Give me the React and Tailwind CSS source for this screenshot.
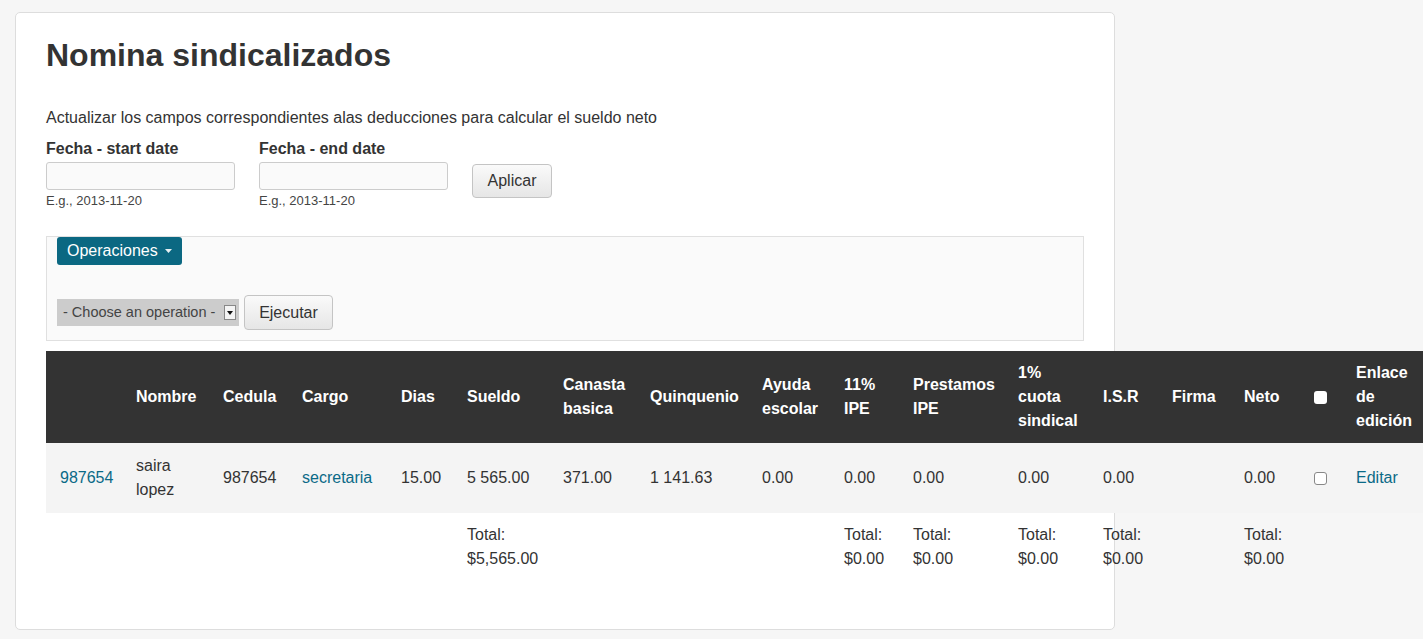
import React from 'react'

const FONT = { fontFamily: '"Liberation Sans", Arial, sans-serif' }

const cols = [
  { key: 'id', label: [], w: 'w-[76px]' },
  { key: 'nombre', label: ['Nombre'], w: 'w-[87px]' },
  { key: 'cedula', label: ['Cedula'], w: 'w-[79px]' },
  { key: 'cargo', label: ['Cargo'], w: 'w-[99px]' },
  { key: 'dias', label: ['Dias'], w: 'w-[66px]' },
  { key: 'sueldo', label: ['Sueldo'], w: 'w-[96px]' },
  { key: 'canasta', label: ['Canasta', 'basica'], w: 'w-[87px]' },
  { key: 'quinq', label: ['Quinquenio'], w: 'w-[112px]' },
  { key: 'ayuda', label: ['Ayuda', 'escolar'], w: 'w-[82px]' },
  { key: 'ipe', label: ['11%', 'IPE'], w: 'w-[69px]' },
  { key: 'prest', label: ['Prestamos', 'IPE'], w: 'w-[105px]' },
  { key: 'cuota', label: ['1%', 'cuota', 'sindical'], w: 'w-[85px]' },
  { key: 'isr', label: ['I.S.R'], w: 'w-[69px]' },
  { key: 'firma', label: ['Firma'], w: 'w-[72px]' },
  { key: 'neto', label: ['Neto'], w: 'w-[70px]' },
  { key: 'check', label: [], w: 'w-[42px]' },
  { key: 'enlace', label: ['Enlace', 'de', 'edición'], w: 'w-[90px]' },
]

const row = {
  id: <a className="text-[#0b6a87]" href="#">987654</a>,
  nombre: <>saira<br />lopez</>,
  cedula: '987654',
  cargo: <a className="text-[#0b6a87]" href="#">secretaria</a>,
  dias: '15.00',
  sueldo: '5 565.00',
  canasta: '371.00',
  quinq: '1 141.63',
  ayuda: '0.00',
  ipe: '0.00',
  prest: '0.00',
  cuota: '0.00',
  isr: '0.00',
  firma: '',
  neto: '0.00',
  check: <span className="block h-[13px] w-[13px] rounded-[3px] border border-[#888] bg-white" />,
  enlace: <a className="text-[#0b6a87]" href="#">Editar</a>,
}

const totals = {
  sueldo: '$5,565.00',
  ipe: '$0.00',
  prest: '$0.00',
  cuota: '$0.00',
  isr: '$0.00',
  neto: '$0.00',
}

function DateField({ label }) {
  return (
    <div className="flex flex-col">
      <label className="text-[16px] font-bold leading-[20px] text-[#333]">{label}</label>
      <input className="mt-[3px] h-[28px] w-[189px] rounded-[3px] border border-[#ccc] bg-[#fafafa]" />
      <span className="mt-[4px] text-[13px] leading-[14px] text-[#444]">E.g., 2013-11-20</span>
    </div>
  )
}

export default function App() {
  return (
    <div className="min-h-screen bg-[#f6f6f6] pl-[15px] pt-[12px] text-[#333]" style={FONT}>
      <div className="h-[618px] w-[1100px] rounded-[5px] border border-[#ddd] bg-white pl-[30px] pt-[20px]">
        <h1 className="text-[32px] font-bold leading-[44px] text-[#333]">Nomina sindicalizados</h1>
        <p className="mt-[31px] text-[16px] leading-[20px]">
          Actualizar los campos correspondientes alas deducciones para calcular el sueldo neto
        </p>
        <div className="mt-[11px] flex items-start gap-[24px]">
          <DateField label="Fecha - start date" />
          <DateField label="Fecha - end date" />
          <button className="mt-[25px] h-[34px] w-[80px] rounded-[4px] border border-[#c4c4c4] bg-gradient-to-b from-[#fafafa] to-[#e6e6e6] text-[16px] text-[#333]">
            Aplicar
          </button>
        </div>

        <div className="mt-[28px] h-[105px] w-[1038px] border border-[#e0e0e0] bg-[#fafafa] pl-[10px]">
          <button className="flex h-[28px] items-center gap-[7px] rounded-[3px] bg-[#0b6882] px-[10px] text-[16px] text-white">
            Operaciones
            <svg width="7" height="4" viewBox="0 0 7 4"><path d="M0 0h7L3.5 4z" fill="#e8f0f3" /></svg>
          </button>
          <div className="mt-[30px] flex items-center gap-[5px]">
            <div className="flex h-[27px] w-[182px] items-center justify-between bg-[#cccccc] pl-[6px] pr-[3px] text-[14.5px] text-[#444]">
              <span>- Choose an operation -</span>
              <span className="flex h-[15px] w-[12px] items-center justify-center border border-[#888] bg-[#f4f4f4]">
                <svg width="6" height="4" viewBox="0 0 6 4"><path d="M0 0h6L3 4z" fill="#111" /></svg>
              </span>
            </div>
            <button className="h-[35px] w-[89px] rounded-[4px] border border-[#c4c4c4] bg-gradient-to-b from-[#fafafa] to-[#e6e6e6] text-[16px] text-[#333]">
              Ejecutar
            </button>
          </div>
        </div>

        <table className="mt-[10px] w-[1386px] table-fixed border-collapse text-[16px] leading-[24px]">
          <colgroup>
            {cols.map(c => (
              <col key={c.key} className={c.w} />
            ))}
          </colgroup>
          <thead>
            <tr className="bg-[#333]">
              {cols.map(c => (
                <th key={c.key} className="py-[10px] pl-[14px] text-left align-middle font-bold text-white">
                  {c.key === 'check' ? (
                    <span className="block h-[13px] w-[13px] rounded-[3px] bg-white" />
                  ) : (
                    c.label.map((l, i) => (
                      <span key={i} className="block">
                        {l}
                      </span>
                    ))
                  )}
                </th>
              ))}
            </tr>
          </thead>
          <tbody>
            <tr className="bg-[#f4f4f4]">
              {cols.map(c => (
                <td key={c.key} className="py-[11px] pl-[14px] align-middle">
                  {row[c.key]}
                </td>
              ))}
            </tr>
          </tbody>
          <tfoot>
            <tr>
              {cols.map(c => (
                <td key={c.key} className="py-[10px] pl-[14px] align-top">
                  {totals[c.key] && (
                    <>
                      Total:
                      <br />
                      {totals[c.key]}
                    </>
                  )}
                </td>
              ))}
            </tr>
          </tfoot>
        </table>
      </div>
    </div>
  )
}
